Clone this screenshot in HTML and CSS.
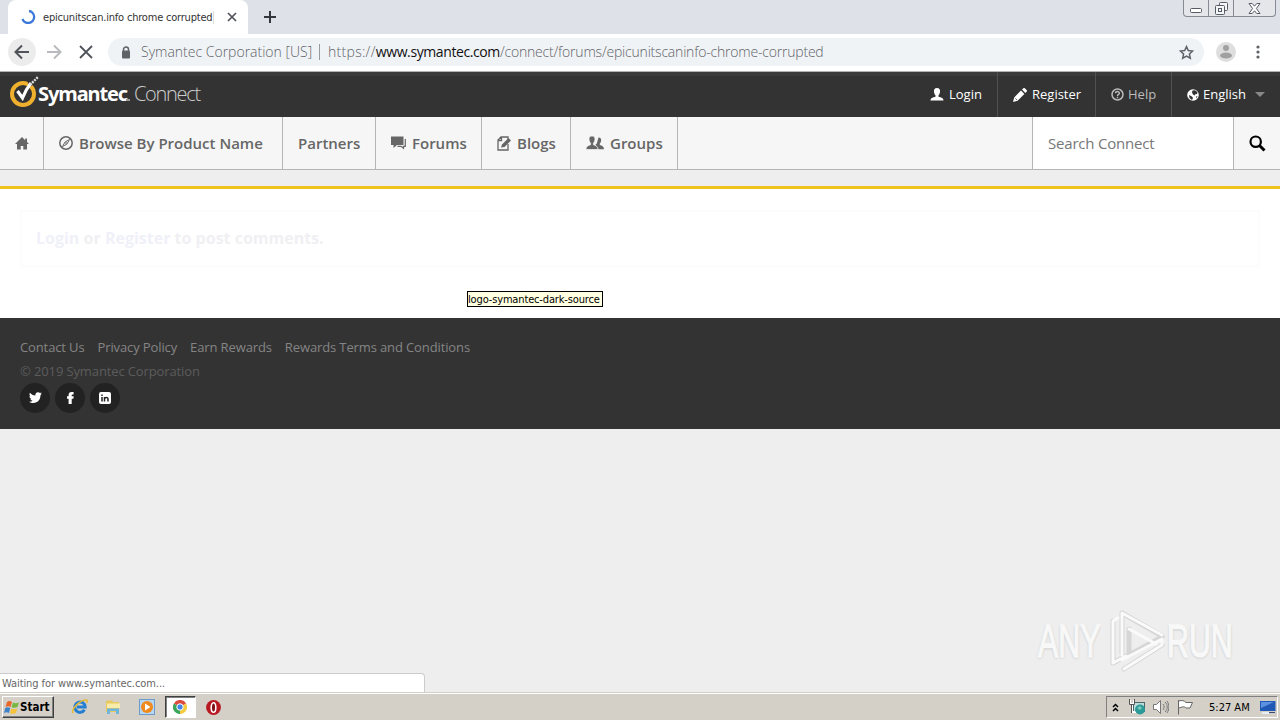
FILE: index.html
```
<!DOCTYPE html>
<html lang="en">
<head>
    <meta charset="UTF-8">
    <meta name="viewport" content="width=device-width, initial-scale=1.0">
    <title>epicunitscan.info chrome corrupted | Symantec Connect</title>
    <link rel="stylesheet" href="styles.css">
</head>
<body>
    <div class="tabstrip">
        <div class="tab">
            <svg class="spinner" width="16" height="16" viewBox="0 0 16 16"><path d="M9 2a6 6 0 1 1-6.500 8" fill="none" stroke="#3b78d8" stroke-width="2.300"/></svg>
            <span class="tab-title">epicunitscan.info chrome corrupted</span>
            <span class="tab-fade"></span>
            <svg class="tab-close" width="10" height="10" viewBox="0 0 10 10"><path d="M1 1l8 8M9 1L1 9" stroke="#50545a" stroke-width="1.700"/></svg>
        </div>
        <svg class="new-tab" width="12" height="12" viewBox="0 0 12 12"><path d="M6 0v12M0 6h12" stroke="#33363b" stroke-width="2"/></svg>
        <div class="window-buttons">
            <span class="win-min"><svg width="12" height="5" viewBox="0 0 12 5"><rect x=".5" y=".5" width="11" height="4" rx="1" fill="#fff" stroke="#565b64"/></svg></span>
            <span class="win-max"><svg width="13" height="13" viewBox="0 0 13 13" fill="#f4f5f7" stroke="#565b64"><rect x="4.500" y=".5" width="8" height="8" rx="1"/><rect x=".5" y="3.500" width="9" height="9" rx="1"/><rect x="3.500" y="6.500" width="3" height="3"/></svg></span>
            <span class="win-close"><svg width="13" height="11" viewBox="0 0 13 11"><path d="M1 .5h3.200l2.300 2.700L8.800.5H12L8.400 5.500l3.600 5H8.800L6.500 7.800l-2.300 2.700H1l3.600-5z" fill="#fff" stroke="#565b64"/></svg></span>
        </div>
    </div>

    <div class="toolbar">
        <span class="back"><svg width="16" height="16" viewBox="0 0 16 16"><path d="M15 8H2M8 1.500L1.500 8 8 14.500" fill="none" stroke="#50545a" stroke-width="2"/></svg></span>
        <svg class="forward" width="16" height="16" viewBox="0 0 16 16"><path d="M1 8h13M8 1.500L14.500 8 8 14.500" fill="none" stroke="#b8babd" stroke-width="2"/></svg>
        <svg class="stop" width="14" height="14" viewBox="0 0 14 14"><path d="M1 1l12 12M13 1L1 13" stroke="#50545a" stroke-width="1.800"/></svg>
        <div class="omnibox">
            <svg class="lock" width="10" height="13" viewBox="0 0 10 13"><path d="M2.500 5V3.500a2.500 2.500 0 0 1 5 0V5" fill="none" stroke="#5f6368" stroke-width="1.500"/><rect x="1" y="4.500" width="8" height="8" rx="1" fill="#5f6368"/></svg>
            <span class="owner">Symantec Corporation [US]</span>
            <span class="divider"></span>
            <span class="url"><span class="scheme">https://</span><b>www.symantec.com</b>/connect/forums/epicunitscaninfo-chrome-corrupted</span>
            <svg class="star" width="15" height="15" viewBox="0 0 15 15"><path d="M7.500 1.600l1.800 4 4.300.4-3.200 2.900.9 4.300-3.800-2.200-3.800 2.200.9-4.300L1.400 6l4.300-.4z" fill="none" stroke="#5f6368" stroke-width="1.500"/></svg>
        </div>
        <svg class="avatar" width="20" height="20" viewBox="0 0 20 20"><circle cx="10" cy="10" r="10" fill="#dedede"/><circle cx="10" cy="6" r="3" fill="#a0a0a0"/><ellipse cx="10" cy="13.500" rx="6" ry="3" fill="#a0a0a0"/></svg>
        <svg class="kebab" width="4" height="14" viewBox="0 0 4 14" fill="#5f6368"><circle cx="2" cy="2" r="1.600"/><circle cx="2" cy="7" r="1.600"/><circle cx="2" cy="12" r="1.600"/></svg>
    </div>

    <header class="site-header">
        <div class="logo">
            <svg width="30" height="34" viewBox="0 0 30 34"><circle cx="13" cy="19" r="11" fill="none" stroke="#efb02e" stroke-width="4"/><path d="M19.500 9.500l6-7" stroke="#333" stroke-width="5"/><path d="M7.500 16l5 7C14.500 18 17 13 21 8" fill="none" stroke="#fff" stroke-width="3.200"/><path d="M20 10l8-8" stroke="#ddd" stroke-width="2.400" stroke-dasharray="2 1"/></svg>
            <span class="logo-name">Symantec</span><span class="logo-dot"></span><span class="logo-product">Connect</span>
        </div>
        <div class="user-menu">
            <a class="login"><svg width="14" height="13" viewBox="0 0 14 13" fill="#fff"><path d="M7 0C4.500 0 3.600 1.800 4 4c.2 1.600.8 2.600 1.500 3.200v1.600C3 9.400.5 10 .5 12.500h13C13.500 10 11 9.400 8.500 8.800V7.200C9.200 6.600 9.800 5.600 10 4c.4-2.200-.5-4-3-4z"/></svg><span>Login</span></a>
            <a class="register"><svg width="14" height="14" viewBox="0 0 14 14" fill="#fff"><path d="M0 14l1.200-4.600L8 2.600 11.400 6l-6.800 6.800zM9 1.600L10.400.3c.4-.4 1-.4 1.400 0l2 2c.3.3.3.8 0 1.200L12.400 5z"/><path d="M2.500 10.500l1.200 1.200" stroke="#333"/></svg><span>Register</span></a>
            <a class="help"><svg width="13" height="13" viewBox="0 0 13 13" fill="none" stroke="#bbb"><circle cx="6.500" cy="6.500" r="5.500" stroke-width="1.500"/><path d="M4.600 5.200c0-2.200 3.800-2.200 3.800 0 0 1.300-1.900 1.200-1.900 2.700M6.500 8.800v1.400" stroke-width="1.400"/></svg><span>Help</span></a>
            <a class="language"><svg width="12" height="12" viewBox="0 0 12 12"><circle cx="6" cy="6" r="5.800" fill="#fff"/><path d="M5.500 1.500L8 1.200l2.500 2-.5 2-1.500-.5L8 6.500 6 5.500 5 3.500zM2 6l3 1.500L6 9 5 11 2.500 9zM9 7.500l1.500-.5L9.500 9.500z" fill="#333"/></svg><span>English</span><i class="caret"></i></a>
        </div>
    </header>

    <nav>
        <a class="nav-home"><svg width="14" height="13" viewBox="0 0 14 13" fill="#666"><path d="M7 0L0 7h2v5.500h3.700V9h2.600v3.500H12V7h2l-2-2V1.500h-1.800v1.700z"/></svg></a>
        <a class="nav-browse"><svg width="14" height="14" viewBox="0 0 14 14"><circle cx="7" cy="7" r="6.200" fill="none" stroke="#666" stroke-width="1.500"/><path d="M10.500 3.500L8 8l-4.500 2.500L6 6z" fill="none" stroke="#666"/><circle cx="7" cy="7" r=".8" fill="#666"/></svg><span>Browse By Product Name</span></a>
        <a class="nav-partners"><span>Partners</span></a>
        <a class="nav-forums"><svg width="15" height="14" viewBox="0 0 15 14"><path d="M0 .5h12.500V9H6l-3.500 3V9H0z" fill="#666"/><path d="M14.300 3v7.300h-1.800v2L10 10.300H6.500" fill="none" stroke="#666" stroke-width="1.200"/></svg><span>Forums</span></a>
        <a class="nav-blogs"><svg width="14" height="15" viewBox="0 0 14 15"><path d="M11 8v6H1V4l3-3h7v2M1 4.500h3.500V1" fill="none" stroke="#666" stroke-width="1.300"/><path d="M4 11.500l1-3L11.500 2 14 4.500 7.500 11z" fill="#666"/></svg><span>Blogs</span></a>
        <a class="nav-groups"><svg width="18" height="14" viewBox="0 0 18 14" fill="#666"><path d="M12.500 1.500c2.200 0 3 1.500 2.600 3.300-.2 1.500-.7 2.300-1.300 2.800v1.300c2 .6 4 1.100 4.200 4.300h-5.500L9.500 8.500l1.300-1z"/><path d="M6 0C3.700 0 2.700 1.600 3.100 3.800c.2 1.700.8 2.700 1.500 3.300v1.600C2.200 9.500 0 10.400 0 13.500h12c0-3.100-2.200-4-4.600-4.800V7.100c.7-.6 1.300-1.600 1.500-3.300C9.300 1.600 8.300 0 6 0z" stroke="#f6f6f6" stroke-width=".7"/></svg><span>Groups</span></a>
        <div class="search-box"><span>Search Connect</span></div>
        <a class="search-button"><svg width="17" height="17" viewBox="0 0 17 17" fill="none" stroke="#000"><circle cx="6.700" cy="6.700" r="5.200" stroke-width="2.200"/><path d="M10.500 10.500l5 5" stroke-width="3"/></svg></a>
    </nav>
    <div class="yellow-bar"></div>

    <main>
        <div class="comment-box"><p><a>Login</a> or <a>Register</a> to post comments.</p></div>
    </main>
    <div class="tooltip"><span>logo-symantec-dark-source</span></div>

    <footer>
        <ul class="footer-links">
            <li>Contact Us</li>
            <li>Privacy Policy</li>
            <li>Earn Rewards</li>
            <li>Rewards Terms and Conditions</li>
        </ul>
        <p class="copyright">© 2019 Symantec Corporation</p>
        <div class="social">
            <span><svg width="13" height="12" viewBox="0 0 13 12" fill="#fff"><path d="M13 1.700l-1.500 1.400C11.500 8 8.500 11 4.500 11 2.800 11 1.200 10.600 0 9.800c1.400.1 2.700-.3 3.600-1.100C2.500 8.500 1.600 7.800 1.300 6.800h1.100C1.200 6.300.4 5.400.4 4.100l1.100.3C.4 3.500.2 2 .9.800c1.300 1.600 3.200 2.600 5.500 2.800C6 1.600 7.300.3 9 .3c.8 0 1.500.3 2 .8L12.600.5l-1 1.500z"/></svg></span>
            <span><svg width="7" height="12" viewBox="0 0 7 12" fill="#fff"><path d="M1.600 12V6.700H0V4.300h1.600V3c0-2 1-3 3-3h2v2.400H5.500c-.6 0-.8.3-.8.900v1h2l-.3 2.400H4.700V12z"/></svg></span>
            <span><svg width="12" height="12" viewBox="0 0 12 12"><rect width="12" height="12" rx="2" fill="#fff"/><path d="M3 5v4.500M3 2.500V4M5.500 9.500V5M5.500 9.500V7c0-1.800 3.500-2 3.500 0v2.500" fill="none" stroke="#222" stroke-width="1.500"/></svg></span>
        </div>
    </footer>

    <div class="watermark">
        <span>ANY</span>
        <svg width="58" height="64" viewBox="0 0 58 64" fill="none" stroke-linejoin="round" stroke-linecap="round"><g stroke="#d6d6d6" stroke-width="5"><path d="M4 54V12M13 44V4l40 23M20 20v26l33-18M4 54l13-7M15 60l38-24"/></g><g stroke="#fafafa" stroke-width="3"><path d="M4 54V12l5-3M13 46V4l40 22M20 20l27 15M4 54l13-7M15 60l38-24v-6L13 51"/></g></svg>
        <span>RUN</span>
    </div>
    <div class="status"><span>Waiting for www.symantec.com...</span></div>

    <div class="taskbar">
        <div class="start">
            <svg width="16" height="15" viewBox="0 0 16 15"><path d="M3 2c2-1.500 3.500-1 5 0L6.500 7c-1.500-1-3-1-5 0z" fill="#e8672b"/><path d="M9 2.500c2 1 3.500 1 6 0L13.500 7c-2 1-4 1-6 .2z" fill="#77b843"/><path d="M1.200 8c2-1 3.300-1 5 0L5 13c-1.500-1-3-1-5 0z" fill="#3d83c9"/><path d="M7.200 8.500c2 1 4 1 6 0L12 13c-2 1-4 1-6 .2z" fill="#f4c33a"/></svg>
            <span>Start</span>
        </div>
        <div class="quick">
            <span><svg width="16" height="16" viewBox="0 0 16 16" fill="none"><path d="M12.500 10.800A5.200 5.200 0 1 1 13.200 8H5" stroke="#247fd0" stroke-width="3"/><path d="M1 14c-2-3 6-13 13-13 2 0 1 2 .5 3" stroke="#e5b934" stroke-width="1.500"/></svg></span>
            <span><svg width="16" height="16" viewBox="0 0 16 16"><path d="M1 3l1-1.500h5L8 3h6v10H1z" fill="#e9c95e"/><path d="M2 4.500h13V9H2z" fill="#f8ecaa"/><path d="M2 15V9.500h12V15h-3v-3H5v3z" fill="#70b5dc"/></svg></span>
            <span><svg width="16" height="16" viewBox="0 0 16 16"><rect x=".5" y=".5" width="15" height="15" fill="#b6d6f1" stroke="#6c9ccb"/><circle cx="8" cy="8" r="6" fill="#f08a1c"/><path d="M6 4.500L11.500 8 6 11.500z" fill="#fff"/></svg></span>
            <span class="active"><svg width="14" height="14" viewBox="0 0 14 14"><path d="M7 7L.9 3.500A7 7 0 0 1 13.100 3.500z" fill="#dc4b3e"/><path d="M7 7L.9 3.500A7 7 0 0 0 7 14z" fill="#3ba559"/><path d="M7 7l6.100-3.500A7 7 0 0 1 7 14z" fill="#f6cb42"/><circle cx="7" cy="7" r="3.200" fill="#4285e8" stroke="#fff"/></svg></span>
            <span><svg width="15" height="15" viewBox="0 0 15 15"><circle cx="7.500" cy="7.500" r="7.400" fill="#b81820"/><ellipse cx="7.500" cy="7.500" rx="2.300" ry="4.800" fill="#811016" stroke="#fff" stroke-width="1.600"/></svg></span>
        </div>
        <div class="tray">
            <svg class="chevrons" width="7" height="9" viewBox="0 0 7 9"><path d="M1 4l2.500-2.500L6 4M1 8l2.500-2.500L6 8" fill="none" stroke="#000" stroke-width="1.500"/></svg>
            <svg class="network" width="16" height="16" viewBox="0 0 16 16"><rect x="4.500" y="3.500" width="11" height="9" fill="#bfdedb" stroke="#4e6768"/><path d="M1 1v4h4V1M3 5v8h4" fill="none" stroke="#fff" stroke-width="2"/><path d="M.5 0v5.500h5V0M2.500 5.500V14" fill="none" stroke="#555"/><circle cx="11" cy="10.500" r="5" fill="#2b9a98"/><path d="M8 9l3-2 2 2-2 2z" fill="#7ccbb8"/></svg>
            <svg class="sound" width="16" height="16" viewBox="0 0 16 16" fill="none" stroke="#777"><path d="M.5 5.500h3l4-4v13l-4-4h-3z" fill="#fff"/><path d="M10 5c1.500 2 1.500 4 0 6M12 3c3 3 3 7 0 10M14 2c2.500 4 2.500 8 0 12"/></svg>
            <svg class="flag" width="16" height="16" viewBox="0 0 16 16"><path d="M1.500 15.500V1M2 2c3-1 5-.5 7 1.500h6.500L13 9H9C7 7 5 8 2 9" fill="#fff" stroke="#666"/></svg>
            <span class="clock">5:27 AM</span>
            <svg class="desktop" width="16" height="14" viewBox="0 0 16 14"><path d="M0 1h15.500v10H0z" fill="#2058b5"/><path d="M1 2h13L1 8z" fill="#5c91df"/><path d="M2 13h7" stroke="#e6eef6" stroke-width="2"/><path d="M9 12.500h6" stroke="#344c75"/></svg>
        </div>
    </div>
</body>
</html>
```
FILE: styles.css
```
:root {
    --dark: #333;
    --yellow: #f0c21c;
    --nav-line: #b5b5b5;
    --ui: "DejaVu Sans Condensed", "DejaVu Sans", sans-serif;
}

* {
    box-sizing: border-box;
}

body {
    margin: 0;
    width: 1280px;
    height: 720px;
    overflow: hidden;
    position: relative;
    display: flex;
    flex-direction: column;
    background: #eee;
    font-family: "Open Sans", sans-serif;
}

svg {
    display: block;
    flex: none;
}

span {
    white-space: nowrap;
}

/* browser window */
.tabstrip {
    height: 34px;
    flex: none;
    display: flex;
    background: #dee1e8;
    padding-left: 8px;
}

.tab {
    width: 240px;
    height: 34px;
    background: #fff;
    border-radius: 8px 8px 0 0;
    display: flex;
    align-items: center;
    padding: 0 11px 0 12px;
}

.tab-title {
    margin-left: 7px;
    width: 170px;
    font: 11px var(--ui);
    letter-spacing: -0.2px;
    color: #333;
}

.tab-fade {
    width: 1px;
    height: 13px;
    background: #ddd;
    margin-right: 13px;
}

.tab-close {
    margin-right: auto;
}

.new-tab {
    margin: 11px 0 0 16px;
}

.window-buttons {
    margin-left: auto;
    margin-right: 4px;
    width: 93px;
    height: 17px;
    display: flex;
    border: 1px solid #858a94;
    border-top: 0;
    border-radius: 0 0 4px 4px;
    background: #e4e6ea;
}

.window-buttons span {
    display: flex;
    justify-content: center;
    align-items: center;
}

.window-buttons .win-min {
    width: 24px;
    padding-top: 4px;
}

.window-buttons .win-max {
    width: 26px;
    border-left: 1px solid #858a94;
    border-right: 1px solid #858a94;
}

.window-buttons .win-close {
    flex: 1;
}

.toolbar {
    height: 38px;
    flex: none;
    display: flex;
    align-items: center;
    padding: 0 20px 1px 8px;
    background: #fff;
    border-bottom: 1px solid #b4b4b4;
}

.back {
    width: 28px;
    height: 28px;
    border-radius: 50%;
    background: #ececec;
    display: flex;
    align-items: center;
    justify-content: center;
}

.forward {
    margin-left: 10px;
}

.stop {
    margin-left: 17px;
}

.omnibox {
    margin-left: 15px;
    width: 1096px;
    height: 28px;
    border-radius: 14px;
    background: #f0f3f6;
    display: flex;
    align-items: center;
    padding: 0 10px 0 13px;
    font: 14px "Open Sans", sans-serif;
    font-weight: 300;
    color: #5f6368;
}

.owner {
    margin: -1px 0 0 10px;
    width: 172px;
}

.divider {
    width: 1px;
    height: 16px;
    background: #999;
    margin: 0 8px 0 6px;
}

.url {
    margin-top: -1px;
    letter-spacing: -0.2px;
}

.url .scheme {
    letter-spacing: 0.3px;
}

.url b {
    font-weight: 400;
    letter-spacing: -0.4px;
    color: #111;
}

.star {
    margin-left: auto;
}

.avatar {
    margin-left: 12px;
}

.kebab {
    margin-left: auto;
}

/* site header */
.site-header {
    height: 45px;
    flex: none;
    display: flex;
    background: var(--dark);
    border-top: 4px solid #3b3b3b;
}

.logo {
    display: flex;
    align-items: center;
    padding-left: 10px;
    height: 37px;
    color: #fff;
}

.logo svg {
    margin-top: -5px;
}

.logo-name {
    margin: -2px 0 0 -2px;
    width: 88px;
    font: bold 20px "Noto Sans", sans-serif;
    letter-spacing: -1.1px;
}

.logo-dot {
    width: 4px;
    height: 2px;
    background: #999;
    margin: 11px 4px 0 0;
}

.logo-product {
    margin-top: -2px;
    font: 300 20px "Open Sans", sans-serif;
    letter-spacing: -1.3px;
    color: #ccc;
}

.user-menu {
    margin: -4px 0 0 auto;
    display: flex;
    font-size: 13px;
    color: #fff;
}

.user-menu a {
    display: flex;
    align-items: center;
    border-left: 1px solid #505050;
    padding-left: 15px;
}

.user-menu a.login {
    width: 67px;
    padding-left: 0;
    border-left: 0;
}

.user-menu span {
    margin: -2px 0 0 4px;
}

.user-menu .login span,
.user-menu .register span {
    margin-left: 5px;
}

.user-menu .register {
    width: 98px;
}

.user-menu .help {
    width: 76px;
    color: #bbb;
}

.user-menu .language {
    width: 109px;
}

.caret {
    border: 5px solid transparent;
    border-top-color: #888;
    border-bottom: 0;
    margin-left: 9px;
}

nav {
    height: 53px;
    flex: none;
    display: flex;
    background: #f6f6f6;
    border-bottom: 1px solid var(--nav-line);
    font-size: 15px;
    font-weight: 600;
    color: #666;
}

nav a {
    display: flex;
    align-items: center;
    padding-left: 15px;
    border-right: 1px solid var(--nav-line);
}

nav a svg + span {
    margin-left: 6px;
}

.nav-home {
    width: 44px;
}

.nav-browse {
    width: 239px;
}

.nav-partners {
    width: 93px;
}

.nav-forums {
    width: 106px;
}

.nav-blogs {
    width: 89px;
}

.nav-groups {
    width: 107px;
}

.search-box {
    margin-left: auto;
    width: 202px;
    display: flex;
    align-items: center;
    padding-left: 15px;
    background: #fff;
    border-left: 1px solid var(--nav-line);
    border-right: 1px solid var(--nav-line);
    font-weight: 400;
    letter-spacing: -0.2px;
    color: #777;
}

.search-button {
    width: 46px;
    border-right: 0;
}

.yellow-bar {
    height: 19px;
    flex: none;
    border-bottom: 3px solid var(--yellow);
}

main {
    height: 129px;
    flex: none;
    background: #fff;
    padding: 21px 20px;
}

.comment-box {
    height: 57px;
    border: 2px solid #fcfcfc;
    padding: 0 0 2px 14px;
    display: flex;
    align-items: center;
    font-size: 16px;
    font-weight: 700;
    color: #f0f0f3;
}

.comment-box a {
    color: #f0f0f8;
}

.tooltip {
    position: absolute;
    left: 467px;
    top: 291px;
    width: 136px;
    height: 16px;
    border: 1px solid #000;
    background: #ffffe1;
    color: #000;
    font: 11px/15px var(--ui);
    letter-spacing: -0.15px;
}

footer {
    height: 111px;
    flex: none;
    background: var(--dark);
    padding: 19px 20px;
    font-size: 13px;
    letter-spacing: -0.12px;
}

.footer-links {
    margin: 0;
    padding: 0;
    list-style: none;
    display: flex;
    gap: 13px;
    line-height: 20px;
    color: #858585;
}

.copyright {
    margin: 4px 0 2px;
    line-height: 20px;
    color: #5c5c5c;
}

.social {
    display: flex;
    gap: 5px;
}

.social span {
    width: 30px;
    height: 30px;
    border-radius: 50%;
    background: #222;
    display: flex;
    align-items: center;
    justify-content: center;
}

/* overlays at the bottom of the window */
.watermark {
    position: absolute;
    left: 1038px;
    top: 609px;
    display: flex;
    align-items: center;
    color: #f8f8f8;
    font: 46px/64px "Liberation Sans", sans-serif;
    -webkit-text-stroke: 1.5px #f8f8f8;
    text-shadow: 0 1px 3px #b5b5b5;
}

.watermark span {
    width: 66px;
    transform: scaleX(0.66);
    transform-origin: left;
}

.watermark svg {
    margin-left: 5px;
}

.status {
    margin-top: auto;
    width: 425px;
    height: 19px;
    flex: none;
    padding-left: 2px;
    background: #fff;
    border: 1px solid #ccc;
    border-left: 0;
    border-bottom: 0;
    border-top-right-radius: 4px;
    font: 11px/19px var(--ui);
    letter-spacing: -0.08px;
    color: #666;
}

.taskbar {
    height: 28px;
    flex: none;
    display: flex;
    background: #d4d0c8;
    border-top: 1px solid #d4d0c8;
    box-shadow: inset 0 1px #fff;
    padding: 3px 2px 2px;
}

.start {
    width: 52px;
    height: 22px;
    display: flex;
    align-items: center;
    border: 1px solid;
    border-color: #fff #404040 #404040 #fff;
    box-shadow: inset -1px -1px #808080;
    padding-left: 1px;
    font: bold 11.5px var(--ui);
    color: #000;
}

.quick {
    display: flex;
    margin-left: 10px;
}

.quick span {
    width: 31px;
    height: 22px;
    margin-right: 2.5px;
    display: flex;
    align-items: center;
    justify-content: center;
}

.quick .active {
    background: #fff;
    border: 1px solid;
    border-color: #404040 #fff #fff #404040;
    box-shadow: inset 1px 1px #808080;
}

.tray {
    margin-left: auto;
    width: 172px;
    height: 22px;
    display: flex;
    align-items: center;
    border: 1px solid;
    border-color: #808080 #fff #fff #808080;
    padding-left: 5px;
    font: 11px var(--ui);
    color: #000;
}

.network {
    margin-left: 10px;
}

.sound,
.flag {
    margin-left: 8px;
}

.clock {
    margin-left: 16px;
    width: 41px;
}

.desktop {
    margin-left: 10px;
}
```
